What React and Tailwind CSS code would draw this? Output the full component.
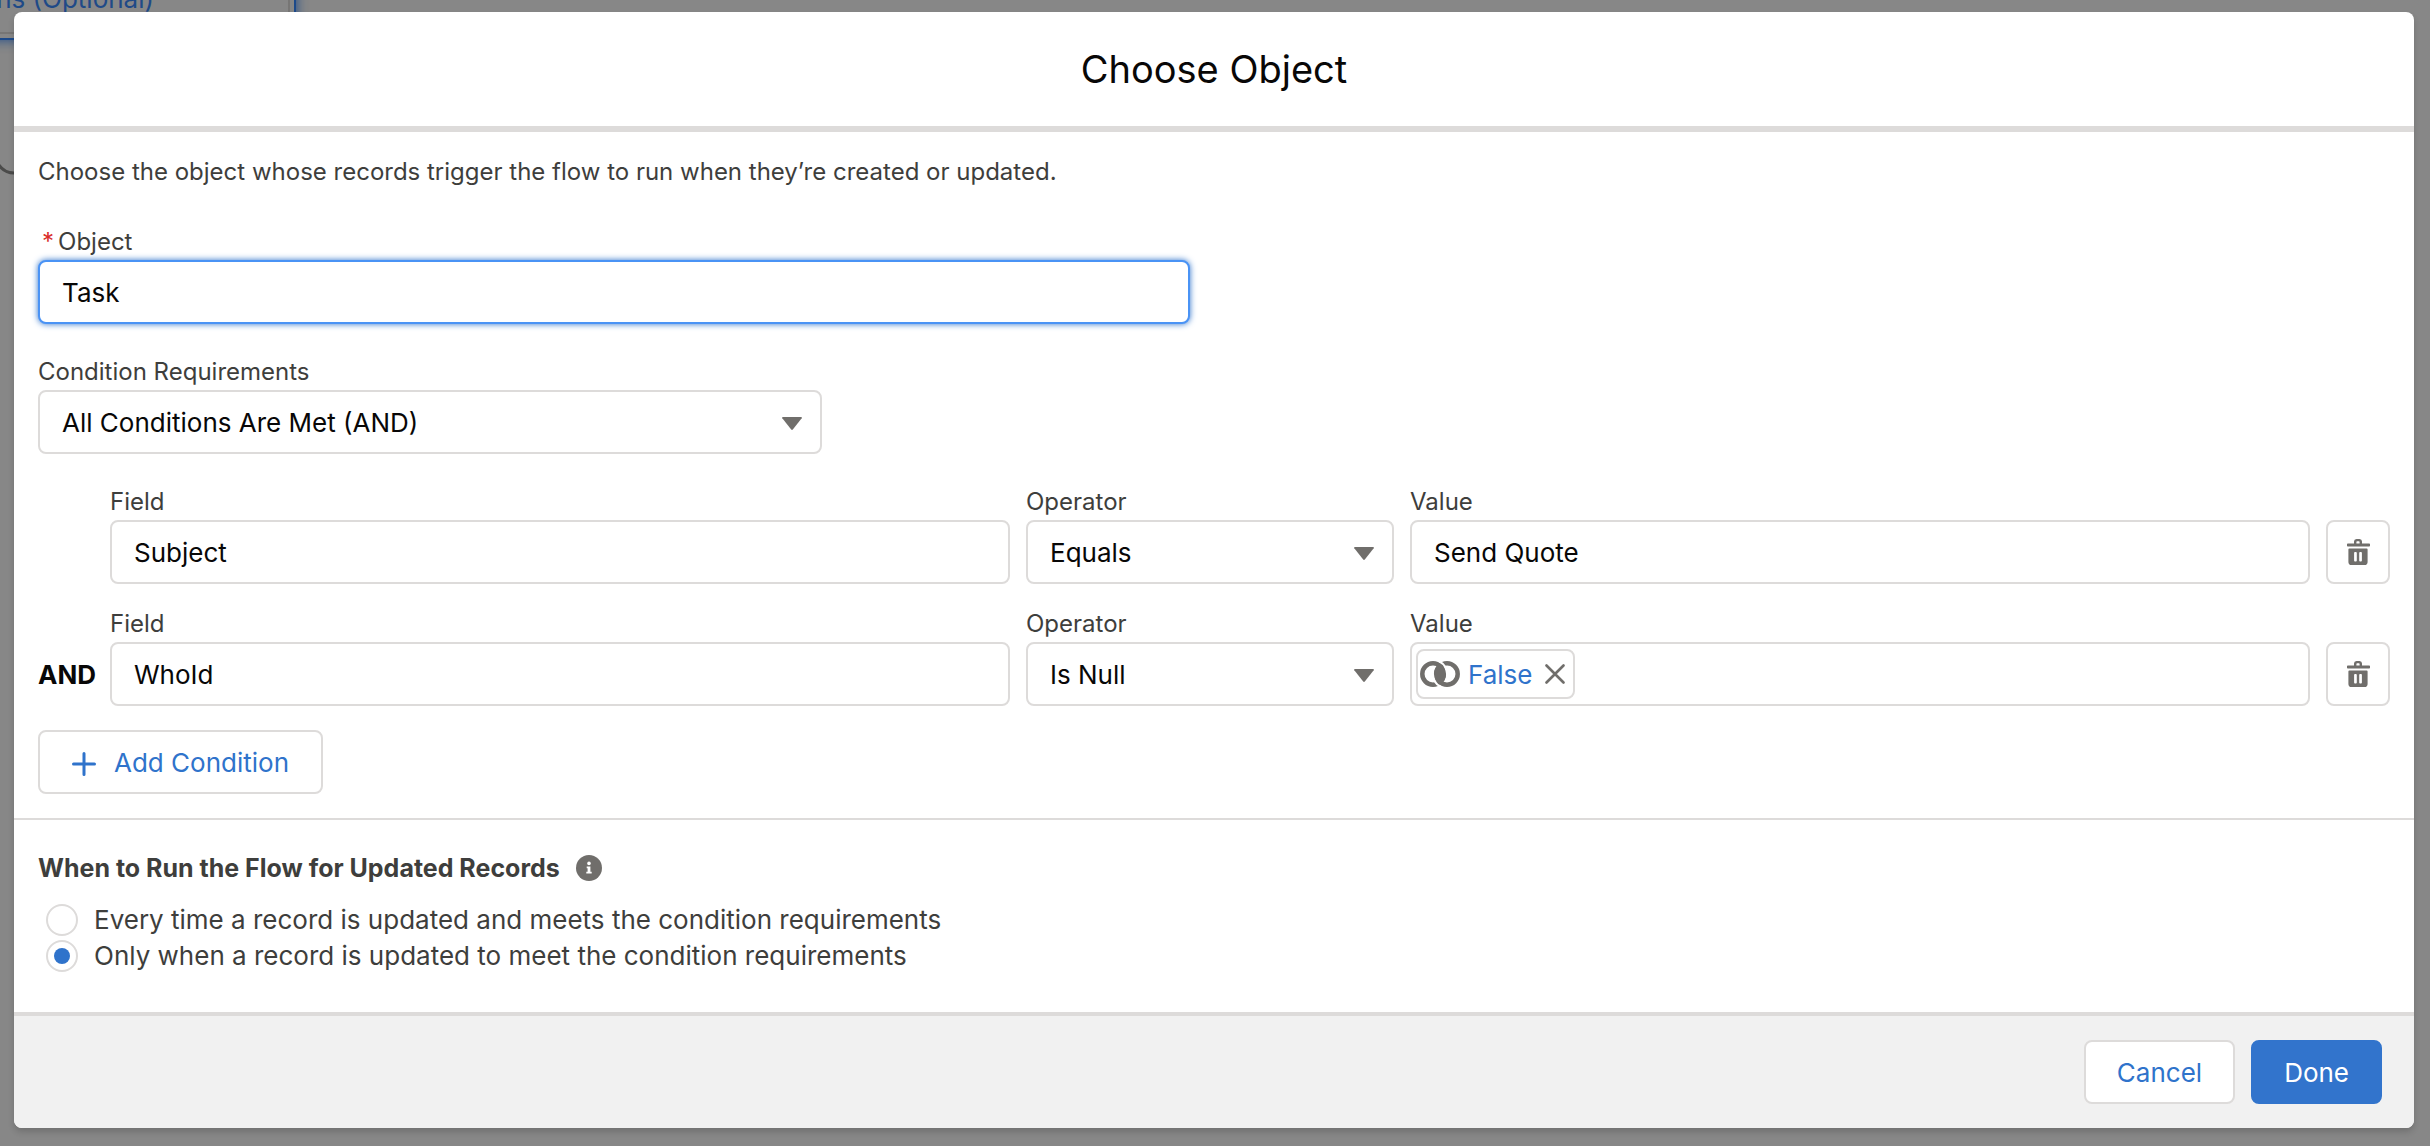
import { useState } from "react";

const conditions = [
  { id: 1, logic: "", field: "Subject", operator: "Equals", value: "Send Quote" },
  { id: 2, logic: "AND", field: "WhoId", operator: "Is Null", pill: "False" },
];

const operators = ["Equals", "Does Not Equal", "Contains", "Is Null"];

const runOptions = [
  { id: "every", label: "Every time a record is updated and meets the condition requirements" },
  { id: "only", label: "Only when a record is updated to meet the condition requirements" },
];

const labelClass = "block text-[24px] leading-8 mb-[2px] text-[#3e3e3c]";
const boxClass =
  "block w-full h-16 rounded-lg border-2 border-[#dddbda] bg-white px-[22px] text-[26px] text-[#080707] outline-none";

function TrashIcon() {
  return (
    <svg viewBox="0 0 26 26" className="w-[26px] h-[26px]" fill="#706e6b" aria-hidden="true">
      <path
        fillRule="evenodd"
        d="M11.5 0h3A2.6 2.6 0 0 1 17 2.600V4.500h7.200a.8.8 0 0 1 .8.8v1.400a.8.8 0 0 1-.8.800H2.800a.8.8 0 0 1-.8-.8V5.300a.8.8 0 0 1 .8-.8H9V2.600A2.600 2.600 0 0 1 11.500 0zm-.1 4.500h3.200V3a.7.7 0 0 0-.7-.7h-1.800a.7.7 0 0 0-.7.700z"
      />
      <path
        fillRule="evenodd"
        d="M4.300 9.600h17.400a.9.9 0 0 1 .9.900v12.400a3.100 3.100 0 0 1-3.100 3.100h-13a3.100 3.100 0 0 1-3.100-3.100V10.500a.9.900 0 0 1 .9-.9zM10 13a.9.900 0 0 0-.9.900v7.600a.9.900 0 0 0 .9.900h.9a.9.900 0 0 0 .9-.9v-7.600a.9.900 0 0 0-.9-.9zm5.100 0a.9.900 0 0 0-.9.900v7.600a.9.900 0 0 0 .9.900h.9a.9.900 0 0 0 .9-.9v-7.600a.9.900 0 0 0-.9-.9z"
      />
    </svg>
  );
}

// two linked rings, used for boolean resources
function RingsIcon() {
  return (
    <svg viewBox="0 0 40 26" className="w-10 h-[26px]" fill="none" aria-hidden="true">
      <g stroke="#706e6b" strokeWidth="4.500">
        <circle cx="13" cy="13" r="10.700" />
        <circle cx="27" cy="13" r="10.700" />
      </g>
      <path d="M20 2A13 13 0 0 1 20 24A13 13 0 0 1 20 2z" fill="#706e6b" />
      <g stroke="#fff" strokeWidth="2">
        <path d="M13 13A14 14 0 0 0 20.500 25.500" />
        <path d="M27 13A14 14 0 0 0 19.500.5" />
      </g>
    </svg>
  );
}

function SelectBox({ id, value, options }) {
  return (
    <div className="relative">
      <select id={id} defaultValue={value} className={`${boxClass} appearance-none pr-14`}>
        {options.map((o) => (
          <option key={o}>{o}</option>
        ))}
      </select>
      <svg
        viewBox="0 0 20 13"
        className="absolute right-5 top-[27px] w-5 h-[13px] pointer-events-none"
        fill="#706e6b"
        aria-hidden="true"
      >
        <path d="M.8 0h18.400q1 .2.500 1.200L10.800 12.500q-.8.800-1.600 0L.3 1.200Q-.2.200.8 0z" />
      </svg>
    </div>
  );
}

function ConditionRow({ row }) {
  return (
    <div className="flex items-end gap-4">
      <div className="w-14 h-16 shrink-0 flex items-center text-[26px] font-bold text-[#080707]">{row.logic}</div>
      <div className="flex-[900] min-w-0">
        <label htmlFor={`field-${row.id}`} className={labelClass}>Field</label>
        <input id={`field-${row.id}`} type="text" defaultValue={row.field} className={boxClass} />
      </div>
      <div className="flex-[368] min-w-0">
        <label htmlFor={`operator-${row.id}`} className={labelClass}>Operator</label>
        <SelectBox id={`operator-${row.id}`} value={row.operator} options={operators} />
      </div>
      <div className="flex-[900] min-w-0">
        <label htmlFor={`value-${row.id}`} className={labelClass}>Value</label>
        {row.pill ? (
          <div className="flex items-center h-16 rounded-lg border-2 border-[#dddbda] bg-white px-1">
            <span className="flex items-center h-[50px] rounded-lg border-2 border-[#dddbda] px-[2px] text-[26px] text-[#2f73cb]">
              <RingsIcon />
              <a href="#value" className="ml-2">{row.pill}</a>
              <button type="button" aria-label="Remove" className="ml-3 mr-[6px]">
                <svg viewBox="0 0 20 20" className="w-5 h-5" stroke="#706e6b" strokeWidth="2.600" strokeLinecap="round" aria-hidden="true">
                  <path d="M1.500 1.500l17 17M18.500 1.500l-17 17" />
                </svg>
              </button>
            </span>
            <input id={`value-${row.id}`} type="text" className="flex-1 min-w-0 h-full px-3 text-[26px] outline-none" />
          </div>
        ) : (
          <input id={`value-${row.id}`} type="text" defaultValue={row.value} className={boxClass} />
        )}
      </div>
      <button
        type="button"
        aria-label="Delete condition"
        className="w-16 h-16 shrink-0 flex items-center justify-center rounded-lg border-2 border-[#dddbda] bg-white"
      >
        <TrashIcon />
      </button>
    </div>
  );
}

export default function App() {
  const [runWhen, setRunWhen] = useState("only");

  return (
    <div className="relative min-h-screen overflow-hidden bg-[#878787] pt-3 pb-[18px] pl-[14px] pr-4 font-[Inter,sans-serif]">
      {/* canvas behind the modal */}
      <div className="absolute -left-20 -top-20 w-[376px] h-[120px] rounded-b-sm border-2 border-[#1d4a8a] shadow-[0_0_12px_#1d4a8a]" />
      <div className="absolute -left-20 -top-20 w-[370px] h-[114px] border-2 border-[#777675]" />
      <div className="absolute right-[2276px] -top-[17px] text-[26px] leading-8 whitespace-nowrap text-[#1f4a87]">Conditions (Optional)</div>
      <svg viewBox="0 0 20 20" className="absolute left-0 top-[156px] w-5 h-5" fill="none" stroke="#4b4b4a" strokeWidth="3" aria-hidden="true">
        <path d="M-4 4Q2 17 14 17" />
      </svg>

      <section
        role="dialog"
        aria-labelledby="modal-title"
        className="relative flex flex-col rounded-lg bg-white text-[#3e3e3c] shadow-[0_4px_6px_rgba(0,0,0,0.16)]"
      >
        <header className="py-8 border-b-[6px] border-[#dddbda] text-center">
          <h1 id="modal-title" className="text-[38px] leading-[50px] text-[#080707]">Choose Object</h1>
        </header>

        <div className="px-6 pt-6 pb-6 border-b-2 border-[#dddbda]">
          <p className="text-[24px] leading-8">
            Choose the object whose records trigger the flow to run when they’re created or updated.
          </p>

          <div className="mt-[38px] w-[49%]">
            <label htmlFor="object" className={labelClass}>
              <span className="mx-1 text-[#d92d2a]">*</span>Object
            </label>
            <input
              id="object"
              type="text"
              defaultValue="Task"
              className="block w-full h-16 rounded-lg border-2 border-[#4a93f5] bg-white px-[22px] text-[26px] text-[#080707] outline-none shadow-[0_0_6px_#2f73cb]"
            />
          </div>

          <div className="mt-8 w-1/3">
            <label htmlFor="logic" className={labelClass}>Condition Requirements</label>
            <SelectBox id="logic" value="All Conditions Are Met (AND)" options={["All Conditions Are Met (AND)", "Any Condition Is Met (OR)"]} />
          </div>

          <div className="mt-8 flex flex-col gap-6">
            {conditions.map((row) => (
              <ConditionRow key={row.id} row={row} />
            ))}
          </div>

          <button
            type="button"
            className="mt-6 h-16 flex items-center rounded-lg border-2 border-[#dddbda] bg-white px-8 text-[26px] text-[#2f73cb]"
          >
            <svg viewBox="0 0 24 24" className="mt-1 mr-[18px] w-6 h-6" stroke="#2f73cb" strokeWidth="3" strokeLinecap="round" aria-hidden="true">
              <path d="M12 1.500v21M1.500 12h21" />
            </svg>
            Add Condition
          </button>
        </div>

        <div role="radiogroup" aria-labelledby="run-title" className="px-6 pt-8 pb-10">
          <div className="flex items-center">
            <h2 id="run-title" className="text-[25px] leading-8 font-bold">When to Run the Flow for Updated Records</h2>
            <button type="button" aria-label="Help" className="ml-4">
              <svg viewBox="0 0 26 26" className="w-[26px] h-[26px]" aria-hidden="true">
                <circle cx="13" cy="13" r="13" fill="#706e6b" />
                <circle cx="13" cy="8.400" r="1.800" fill="#fff" />
                <path d="M10.700 11.500h3.700v5.300h1.300v1.800h-5.400v-1.800h1.300v-3.500h-.9z" fill="#fff" />
              </svg>
            </button>
          </div>
          <div className="mt-5 ml-2 flex flex-col gap-1">
            {runOptions.map((o) => (
              <label key={o.id} className="flex items-center gap-4 text-[26px] leading-8">
                <input
                  type="radio"
                  name="run-when"
                  checked={runWhen === o.id}
                  onChange={() => setRunWhen(o.id)}
                  className="grid place-content-center appearance-none w-8 h-8 rounded-full border-2 border-[#dddbda] bg-white before:w-4 before:h-4 before:rounded-full checked:before:bg-[#2f73cb]"
                />
                {o.label}
              </label>
            ))}
          </div>
        </div>

        <footer className="flex justify-end gap-4 rounded-b-lg border-t-4 border-[#dddbda] bg-[#f1f1f1] px-8 py-6">
          <button type="button" className="h-16 rounded-lg border-2 border-[#dddbda] bg-white px-[31px] text-[26px] text-[#2f73cb]">Cancel</button>
          <button type="button" className="h-16 rounded-lg border-2 border-[#3274cc] bg-[#3274cc] px-[31px] text-[26px] text-white">Done</button>
        </footer>
      </section>
    </div>
  );
}
